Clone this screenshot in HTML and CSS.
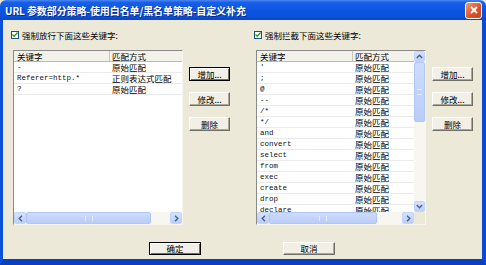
FILE: index.html
```html
<!DOCTYPE html>
<html lang="zh-CN">
<head>
    <meta charset="UTF-8">
    <title>URL 参数部分策略</title>
    <link rel="stylesheet" href="styles.css">
</head>
<body>
<div class="window">
    <div class="titlebar">
        <span class="title">URL 参数部分策略-使用白名单/黑名单策略-自定义补充</span>
        <span class="close">
            <svg width="10" height="10" viewBox="0 0 10 10"><path d="M2 2 L8 8 M8 2 L2 8" stroke="#fff" stroke-width="1.8" fill="none"/></svg>
        </span>
    </div>
    <div class="frame">
        <div class="panes">
            <div class="pane">
                <label class="check">
                    <span class="box"><svg width="7" height="7" viewBox="0 0 7 7"><path d="M0.5 3.5 L2.6 5.6 L6.5 1.2" stroke="#21a121" stroke-width="1.5" fill="none"/></svg></span>
                    强制放行下面这些关键字:
                </label>
                <div class="pane-body">
                    <div class="list">
                        <div class="view">
                            <div class="row head"><span class="c1">关键字</span><span class="c2">匹配方式</span></div>
                            <div class="row"><span class="c1 kw">-</span><span class="c2">原始匹配</span></div>
                            <div class="row"><span class="c1 kw">Referer=http.*</span><span class="c2">正则表达式匹配</span></div>
                            <div class="row"><span class="c1 kw">?</span><span class="c2">原始匹配</span></div>
                        </div>
                        <div class="hscroll">
                            <span class="arrow"><svg width="5" height="7" viewBox="0 0 5 7"><path d="M4 0.8 L1.2 3.5 L4 6.2" stroke="#4d6185" stroke-width="1.4" fill="none"/></svg></span>
                            <span class="thumb thumb-wide"><i></i></span>
                            <span class="track"></span>
                            <span class="arrow"><svg width="5" height="7" viewBox="0 0 5 7"><path d="M1 0.8 L3.8 3.5 L1 6.2" stroke="#4d6185" stroke-width="1.4" fill="none"/></svg></span>
                        </div>
                    </div>
                    <div class="buttons">
                        <button class="btn default">增加...</button>
                        <button class="btn">修改...</button>
                        <button class="btn">删除</button>
                    </div>
                </div>
            </div>

            <div class="pane pane-right">
                <label class="check">
                    <span class="box"><svg width="7" height="7" viewBox="0 0 7 7"><path d="M0.5 3.5 L2.6 5.6 L6.5 1.2" stroke="#21a121" stroke-width="1.5" fill="none"/></svg></span>
                    强制拦截下面这些关键字:
                </label>
                <div class="pane-body">
                    <div class="list list-v">
                        <div class="view">
                            <div class="row head"><span class="c1">关键字</span><span class="c2">匹配方式</span></div>
                            <div class="row"><span class="c1 kw">'</span><span class="c2">原始匹配</span></div>
                            <div class="row"><span class="c1 kw">;</span><span class="c2">原始匹配</span></div>
                            <div class="row"><span class="c1 kw">@</span><span class="c2">原始匹配</span></div>
                            <div class="row"><span class="c1 kw">--</span><span class="c2">原始匹配</span></div>
                            <div class="row"><span class="c1 kw">/*</span><span class="c2">原始匹配</span></div>
                            <div class="row"><span class="c1 kw">*/</span><span class="c2">原始匹配</span></div>
                            <div class="row"><span class="c1 kw">and</span><span class="c2">原始匹配</span></div>
                            <div class="row"><span class="c1 kw">convert</span><span class="c2">原始匹配</span></div>
                            <div class="row"><span class="c1 kw">select</span><span class="c2">原始匹配</span></div>
                            <div class="row"><span class="c1 kw">from</span><span class="c2">原始匹配</span></div>
                            <div class="row"><span class="c1 kw">exec</span><span class="c2">原始匹配</span></div>
                            <div class="row"><span class="c1 kw">create</span><span class="c2">原始匹配</span></div>
                            <div class="row"><span class="c1 kw">drop</span><span class="c2">原始匹配</span></div>
                            <div class="row"><span class="c1 kw">declare</span><span class="c2">原始匹配</span></div>
                        </div>
                        <div class="vscroll">
                            <span class="arrow"><svg width="7" height="5" viewBox="0 0 7 5"><path d="M0.8 4 L3.5 1.2 L6.2 4" stroke="#4d6185" stroke-width="1.4" fill="none"/></svg></span>
                            <span class="thumb thumb-tall"><i></i></span>
                            <span class="track"></span>
                            <span class="arrow"><svg width="7" height="5" viewBox="0 0 7 5"><path d="M0.8 1 L3.5 3.8 L6.2 1" stroke="#4d6185" stroke-width="1.4" fill="none"/></svg></span>
                        </div>
                        <div class="hscroll">
                            <span class="arrow"><svg width="5" height="7" viewBox="0 0 5 7"><path d="M4 0.8 L1.2 3.5 L4 6.2" stroke="#4d6185" stroke-width="1.4" fill="none"/></svg></span>
                            <span class="thumb thumb-mid"><i></i></span>
                            <span class="track"></span>
                            <span class="arrow"><svg width="5" height="7" viewBox="0 0 5 7"><path d="M1 0.8 L3.8 3.5 L1 6.2" stroke="#4d6185" stroke-width="1.4" fill="none"/></svg></span>
                        </div>
                        <div class="corner"></div>
                    </div>
                    <div class="buttons">
                        <button class="btn">增加...</button>
                        <button class="btn">修改...</button>
                        <button class="btn">删除</button>
                    </div>
                </div>
            </div>
        </div>
        <div class="footer">
            <button class="btn btn-wide default">确定</button>
            <button class="btn btn-wide">取消</button>
        </div>
    </div>
</div>
</body>
</html>
```

FILE: styles.css
```css
body {
    margin: 0;
    font-family: "Noto Sans CJK SC", sans-serif;
    font-size: 8.5px;
    color: #000;
    background: #ece9d8;
}
.window {
    width: 486px;
    height: 265px;
    display: flex;
    flex-direction: column;
}
.titlebar {
    height: 20px;
    display: flex;
    align-items: center;
    justify-content: space-between;
    padding: 0 4px 0 5px;
    background: linear-gradient(#4a87f2 0%, #1a5fe6 12%, #0a54e0 50%, #0b50d8 85%, #0a45c6 100%);
    border-radius: 6px 6px 0 0;
}
.title {
    color: #fff;
    font-weight: bold;
    font-size: 10px;
    letter-spacing: -0.1px;
    text-shadow: 1px 1px 0 #0a2a8a;
    white-space: nowrap;
}
.close {
    width: 17px;
    height: 17px;
    display: flex;
    align-items: center;
    justify-content: center;
    border: 1px solid #fff;
    border-radius: 3px;
    background: linear-gradient(135deg, #f29a78, #e0532a 55%, #c7421f);
    box-sizing: border-box;
}
.frame {
    flex: 1;
    display: flex;
    flex-direction: column;
    background: #ece9d8;
    border-left: 3px solid #0a50d9;
    border-right: 4px solid #0a4bd0;
    border-bottom: 6px solid #0840bf;
    padding: 10px 0 0 10px;
}
.panes {
    display: flex;
}
.pane {
    display: flex;
    flex-direction: column;
}
.pane-right {
    margin-left: 26px;
}
.check {
    display: flex;
    align-items: center;
    gap: 3px;
    height: 9px;
    margin: 0 0 11px -2px;
    white-space: nowrap;
}
.box {
    width: 8px;
    height: 8px;
    display: flex;
    align-items: center;
    justify-content: center;
    background: #fff;
    border: 1px solid #1c5180;
    box-sizing: border-box;
}
.pane-body {
    display: flex;
}
.list {
    width: 170px;
    height: 175px;
    box-sizing: border-box;
    border: 1px solid;
    border-color: #8a8a8a #f6f5ee #f6f5ee #8a8a8a;
    background: #fff;
    display: grid;
    grid-template-columns: 1fr;
    grid-template-rows: 1fr 12px;
    overflow: hidden;
}
.list-v {
    grid-template-columns: 1fr 11px;
}
.view {
    overflow: hidden;
}
.row {
    display: flex;
    height: 11px;
    align-items: center;
    border-bottom: 1px solid #ebebeb;
    box-sizing: border-box;
    white-space: nowrap;
}
.row.head {
    background: #f3f2ea;
    border-bottom: 1px solid #bdbbb0;
}
.c1 {
    width: 96px;
    padding-left: 3px;
    box-sizing: border-box;
    flex-shrink: 0;
}
.head .c1 {
    border-right: 1px solid #c9c7ba;
    height: 10px;
    line-height: 10px;
}
.c2 {
    padding-left: 2px;
}
.kw {
    font-family: "Liberation Mono", monospace;
    font-size: 7.5px;
    color: #111;
}
.hscroll {
    display: flex;
    background: #f7f6f1;
    height: 12px;
}
.vscroll {
    display: flex;
    flex-direction: column;
    background: #f7f6f1;
}
.arrow {
    width: 11px;
    height: 11px;
    flex-shrink: 0;
    display: flex;
    align-items: center;
    justify-content: center;
    background: linear-gradient(#d6e2fc, #bccffa);
    border: 1px solid #c3d3fd;
    border-radius: 2px;
    box-sizing: border-box;
}
.hscroll .arrow {
    height: 12px;
    width: 12px;
}
.thumb {
    display: flex;
    align-items: center;
    justify-content: center;
    background: linear-gradient(#cddbfc, #b9cdfb);
    border: 1px solid #b2c6f6;
    border-radius: 2px;
    box-sizing: border-box;
}
.thumb i {
    width: 6px;
    height: 5px;
    border-left: 1px solid #e6eefe;
    border-right: 1px solid #e6eefe;
}
.vscroll .thumb i {
    width: 5px;
    height: 4px;
    border: 0;
    border-top: 1px solid #e6eefe;
    border-bottom: 1px solid #e6eefe;
}
.thumb-wide {
    width: 125px;
}
.thumb-mid {
    width: 108px;
}
.thumb-tall {
    height: 60px;
}
.track {
    flex: 1;
}
.corner {
    background: #ece9d8;
}
.buttons {
    display: flex;
    flex-direction: column;
    gap: 11px;
    padding-top: 17px;
    margin-left: 6px;
}
.btn {
    width: 41px;
    height: 14px;
    padding: 0;
    font-family: "Noto Sans CJK SC", sans-serif;
    font-size: 8.5px;
    line-height: 12px;
    color: #000;
    background: #f1efe6;
    border: 1px solid;
    border-color: #fff #716f64 #716f64 #fff;
    box-shadow: inset -1px -1px 0 #aca899;
}
.btn.default {
    border: 1px solid #000;
    box-shadow: inset 1px 1px 0 #fff, inset -1px -1px 0 #716f64;
}
.footer {
    display: flex;
    gap: 82px;
    padding-left: 136px;
    margin-top: 17px;
}
.btn-wide {
    width: 52px;
    height: 13px;
    line-height: 11px;
}
```
